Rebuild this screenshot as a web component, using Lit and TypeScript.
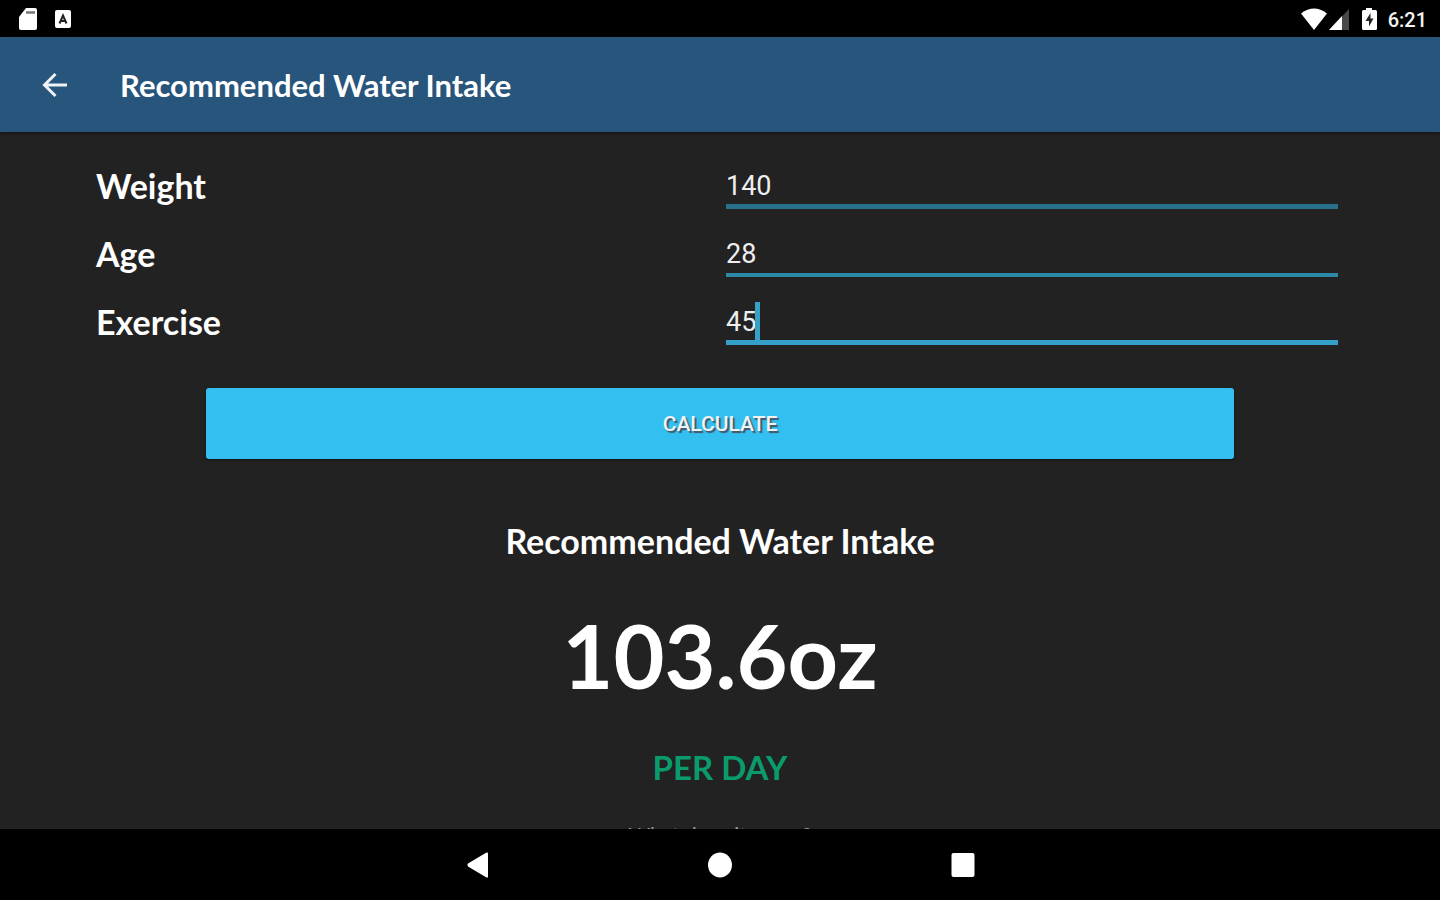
import { LitElement, html, css } from "lit";
import { customElement, state } from "lit/decorators.js";

@customElement("status-bar")
class StatusBar extends LitElement {
  static styles = css`
    :host {
      display: flex;
      align-items: center;
      justify-content: space-between;
      height: 37px;
      padding: 0 13px 0 17px;
      background: #000;
      color: #f4f4f4;
      font: 500 20px/24px Roboto, sans-serif;
    }
    .group {
      display: flex;
      align-items: center;
    }
    .notices {
      gap: 16px;
    }
    .clock {
      margin-left: 10px;
      padding-top: 2px;
    }
    .battery {
      margin-left: 11px;
    }
    svg {
      display: block;
    }
  `;

  render() {
    return html`
      <div class="group notices">
        <svg width="21" height="24" viewBox="0 0 21 24" aria-label="SD card">
          <path d="M9 1h9q2 0 2 2v18q0 2-2 2H4q-2 0-2-2v-11z" fill="#fff" />
          <path d="M9 5.500h9" stroke="#777" stroke-width="2.500" />
        </svg>
        <svg width="18" height="20" viewBox="0 0 18 20" aria-label="Keyboard">
          <rect x="1" y="1" width="16" height="18" rx="2" fill="#fff" />
          <path d="M5.500 14.500L9 6.500l3.500 8M7 12h4" fill="none" stroke="#222" stroke-width="2" />
        </svg>
      </div>
      <div class="group">
        <svg width="27" height="24" viewBox="0 0 27 24" aria-label="Wi-Fi">
          <path d="M0 6.500Q13 -3.500 26 6.500L13 23z" fill="#fff" />
        </svg>
        <svg width="22" height="24" viewBox="0 0 22 24" aria-label="Signal">
          <path d="M21 2v21H1z" fill="#484848" />
          <path d="M14 9v14H1z" fill="#fff" />
        </svg>
        <svg class="battery" width="17" height="24" viewBox="0 0 17 24" aria-label="Battery">
          <path d="M5 1h6v2h3.500q1.500 0 1.500 1.500v17q0 1.500-1.500 1.500h-12Q1 23 1 21.500v-17Q1 3 2.500 3H5z" fill="#fff" />
          <path d="M9.500 6L4.500 14h3.500v5.500L12.500 11.500H9.500z" fill="#222" />
        </svg>
        <span class="clock">6:21</span>
      </div>
    `;
  }
}

@customElement("nav-bar")
class NavBar extends LitElement {
  static styles = css`
    :host {
      display: flex;
      justify-content: center;
      align-items: center;
      gap: 195px;
      height: 71px;
      background: #000;
    }
    button {
      display: grid;
      place-items: center;
      width: 48px;
      height: 48px;
      padding: 0;
      border: 0;
      background: none;
    }
    svg {
      fill: #fff;
    }
  `;

  render() {
    return html`
      <button aria-label="Back">
        <svg width="26" height="28" viewBox="0 0 26 28"><path d="M3.500 14Q3 13.500 4 12.500L22.500 1.500q1.500-.5 1.500 1v23q0 1.500-1.500 1L4 15.500z" /></svg>
      </button>
      <button aria-label="Home">
        <svg width="26" height="28" viewBox="0 0 26 28"><ellipse cx="13" cy="14" rx="12" ry="12.500" /></svg>
      </button>
      <button aria-label="Recent apps">
        <svg width="26" height="28" viewBox="0 0 26 28"><rect x="1.500" y="2" width="23" height="24" rx="2" /></svg>
      </button>
    `;
  }
}

@customElement("app-root")
class AppRoot extends LitElement {
  static styles = css`
    :host {
      display: flex;
      flex-direction: column;
      height: 100vh;
      background: #222;
      color: #fff;
      font-family: Lato, sans-serif;
      font-weight: 700;
    }
    header {
      display: flex;
      align-items: center;
      flex: none;
      height: 95px;
      padding: 0 40px;
      gap: 50px;
      background: #27557c;
      box-shadow: 0 1px 3px #111;
    }
    .back {
      display: block;
      padding: 0;
      border: 0;
      background: none;
    }
    .back svg {
      display: block;
    }
    h1,
    h2 {
      margin: 0;
      font-weight: 700;
    }
    h1 {
      font-size: 31px;
      line-height: 36px;
    }
    main {
      flex: 1;
      min-height: 0;
      overflow: hidden;
      padding: 20px 96px 0;
    }
    .row {
      display: grid;
      grid-template-columns: 1fr 1fr;
      align-items: center;
      height: 68px;
    }
    .row label {
      font-size: 34px;
      line-height: 40px;
    }
    .field {
      position: relative;
      height: 46px;
      margin: 0 6px;
    }
    input {
      box-sizing: border-box;
      width: 100%;
      height: 100%;
      padding: 4px 0 0;
      border: 0;
      outline: 0;
      border-bottom: 4px solid #2c89a8;
      border-radius: 0;
      background: none;
      color: #eee;
      caret-color: transparent;
      font: 400 27px/32px Roboto, sans-serif;
    }
    .dim input {
      border-bottom: 5px solid #28708c;
    }
    .active input {
      border-bottom: 5px solid #35a1c9;
    }
    .caret {
      position: absolute;
      left: 29px;
      bottom: 5px;
      width: 5px;
      height: 38px;
      background: #35a1c9;
    }
    .calculate {
      display: block;
      width: calc(100% - 220px);
      height: 71px;
      margin: 32px auto 0;
      border: 0;
      border-radius: 3px;
      background: #33c0f1;
      box-shadow: 0 1px 2px #111;
      color: #f2f2f2;
      font: 500 21px/24px Roboto, sans-serif;
      text-shadow: 2px 2px 1px #456;
    }
    .result {
      display: flex;
      flex-direction: column;
      align-items: center;
      padding-top: 62px;
      text-align: center;
    }
    h2 {
      font-size: 34px;
      line-height: 40px;
    }
    .amount {
      padding-top: 38px;
      font-size: 88px;
      line-height: 112px;
    }
    .period {
      padding-top: 36px;
      color: #0a9b6c;
      font-size: 33px;
      line-height: 40px;
    }
    .hint {
      padding-top: 34px;
      color: #999;
      font-size: 21px;
      font-weight: 400;
      line-height: 28px;
      white-space: nowrap;
    }
  `;

  @state() private amount = "103.6oz";

  private calculate() {
    const read = (id: string) =>
      Number((this.renderRoot.querySelector("#" + id) as HTMLInputElement).value);
    const ounces = (read("weight") * read("age")) / 50 + read("exercise") * 0.56;
    this.amount = ounces.toFixed(1) + "oz";
  }

  private row(label: string, value: string, kind = "") {
    const id = label.toLowerCase();
    return html`
      <div class="row ${kind}">
        <label for=${id}>${label}</label>
        <div class="field">
          <input id=${id} type="text" inputmode="numeric" .value=${value} />
          ${kind === "active" ? html`<span class="caret"></span>` : ""}
        </div>
      </div>
    `;
  }

  render() {
    return html`
      <status-bar></status-bar>
      <header>
        <button class="back" aria-label="Back">
          <svg width="30" height="30" viewBox="0 0 30 30" fill="none" stroke="#eef3f8" stroke-width="3">
            <path d="M27 15H5M15.500 4L4.500 15l11 11" />
          </svg>
        </button>
        <h1>Recommended Water Intake</h1>
      </header>
      <main>
        ${this.row("Weight", "140", "dim")}
        ${this.row("Age", "28")}
        ${this.row("Exercise", "45", "active")}
        <button class="calculate" @click=${this.calculate}>CALCULATE</button>
        <section class="result">
          <h2>Recommended Water Intake</h2>
          <div class="amount">${this.amount}</div>
          <div class="period">PER DAY</div>
          <div class="hint">What does it mean?</div>
        </section>
      </main>
      <nav-bar></nav-bar>
    `;
  }
}
